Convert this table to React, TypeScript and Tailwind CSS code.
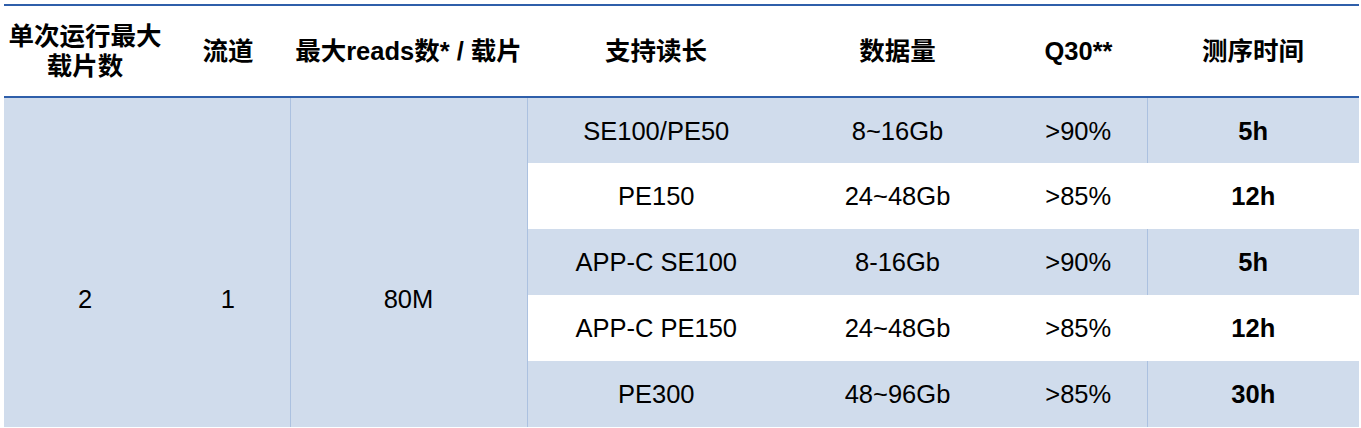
const rows = [
  { read: 'SE100/PE50', data: '8~16Gb', q30: '>90%', time: '5h', blue: true },
  { read: 'PE150', data: '24~48Gb', q30: '>85%', time: '12h', blue: false },
  { read: 'APP-C SE100', data: '8-16Gb', q30: '>90%', time: '5h', blue: true },
  { read: 'APP-C PE150', data: '24~48Gb', q30: '>85%', time: '12h', blue: false },
  { read: 'PE300', data: '48~96Gb', q30: '>85%', time: '30h', blue: true },
]

const font = { fontFamily: '"Liberation Sans", "Noto Sans CJK SC", Arial, sans-serif' }

export default function App() {
  return (
    <div className="w-[1361px] h-[428px] overflow-hidden bg-white pl-[4px] pt-[4px]" style={font}>
      <table className="w-[1355px] table-fixed border-collapse text-black">
        <colgroup>
          <col className="w-[162px]" />
          <col className="w-[124px]" />
          <col className="w-[237px]" />
          <col className="w-[258px]" />
          <col className="w-[225px]" />
          <col className="w-[137px]" />
          <col className="w-[212px]" />
        </colgroup>
        <thead>
          <tr className="h-[92px] border-t-2 border-b-2 border-[#2f5faa] text-[25.5px] font-bold leading-[30px]">
            <th className="p-0 text-center">
              单次运行最大
              <br />
              载片数
            </th>
            <th className="p-0 text-center">流道</th>
            <th className="p-0 text-center whitespace-nowrap">最大reads数* / 载片</th>
            <th className="p-0 text-center">支持读长</th>
            <th className="p-0 text-center">数据量</th>
            <th className="p-0 text-center">Q30**</th>
            <th className="p-0 text-center">测序时间</th>
          </tr>
        </thead>
        <tbody className="text-[25.5px] leading-[30px]">
          {rows.map((r, i) => (
            <tr key={i} className={`h-[66px] ${r.blue ? 'bg-[#d0dcec]' : 'bg-white'}`}>
              {i === 0 && (
                <>
                  <td rowSpan={5} className="p-0 pt-[186px] align-top text-center bg-[#d0dcec]">2</td>
                  <td rowSpan={5} className="p-0 pt-[186px] align-top text-center bg-[#d0dcec] border-r border-[#abc1e0]">1</td>
                  <td rowSpan={5} className="p-0 pt-[186px] align-top text-center bg-[#d0dcec] border-r border-[#abc1e0]">80M</td>
                </>
              )}
              <td className="p-0 text-center">{r.read}</td>
              <td className="p-0 text-center">{r.data}</td>
              <td className="p-0 text-center">{r.q30}</td>
              <td
                className={`p-0 text-center font-bold border-l ${
                  r.blue ? 'border-[#abc1e0]' : 'border-white'
                }`}
              >
                {r.time}
              </td>
            </tr>
          ))}
        </tbody>
      </table>
    </div>
  )
}
